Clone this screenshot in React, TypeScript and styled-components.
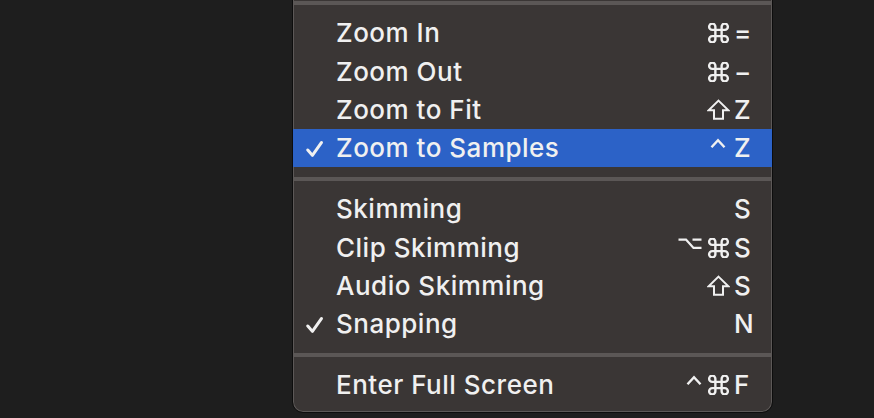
import React from 'react';
import styled, { createGlobalStyle } from 'styled-components';

const GlobalStyle = createGlobalStyle`
  html, body {
    margin: 0;
    padding: 0;
    background: #1e1e1e;
    overflow: hidden;
  }
  body {
    font-family: Inter, "Noto Sans", sans-serif;
  }
`;

type ModKey = 'cmd' | 'shift' | 'opt' | 'ctrl';

type Item =
  | { kind: 'sep' }
  | {
      kind: 'item';
      label: string;
      mods?: ModKey[];
      keyName?: string;
      checked?: boolean;
      active?: boolean;
    };

const items: Item[] = [
  { kind: 'sep' },
  { kind: 'item', label: 'Zoom In', mods: ['cmd'], keyName: '=' },
  { kind: 'item', label: 'Zoom Out', mods: ['cmd'], keyName: '−' },
  { kind: 'item', label: 'Zoom to Fit', mods: ['shift'], keyName: 'Z' },
  { kind: 'item', label: 'Zoom to Samples', mods: ['ctrl'], keyName: 'Z', checked: true, active: true },
  { kind: 'sep' },
  { kind: 'item', label: 'Skimming', keyName: 'S' },
  { kind: 'item', label: 'Clip Skimming', mods: ['opt', 'cmd'], keyName: 'S' },
  { kind: 'item', label: 'Audio Skimming', mods: ['shift'], keyName: 'S' },
  { kind: 'item', label: 'Snapping', keyName: 'N', checked: true },
  { kind: 'sep' },
  { kind: 'item', label: 'Enter Full Screen', mods: ['ctrl', 'cmd'], keyName: 'F' },
];

const INK = '#f0f0f0';

// modifier key glyphs, each drawn in a 20px tall box centred on the cap height
function ModGlyph({ name, last }: { name: ModKey; last: boolean }) {
  if (name === 'cmd') {
    return (
      <svg width="23" height="20" viewBox="2.2 2.4 19.6 19.2">
        <path
          d="M15 6v12a3 3 0 1 0 3-3H6a3 3 0 1 0 3 3V6a3 3 0 1 0-3 3h12a3 3 0 1 0-3-3"
          fill="none"
          stroke={INK}
          strokeWidth="2.3"
          strokeLinejoin="round"
        />
      </svg>
    );
  }
  if (name === 'shift') {
    return (
      <svg width="23" height="21" viewBox="0 0 23 21">
        <path
          d="M11.5 1.6 L21.4 11.3 H16 V19.8 H7 V11.3 H1.6 Z"
          fill="none"
          stroke={INK}
          strokeWidth="2"
          strokeLinejoin="miter"
        />
      </svg>
    );
  }
  if (name === 'opt') {
    return (
      <svg width="24" height="20" viewBox="0 0 24 20">
        <path d="M0.5 1.6 H8 L15.5 9.9 H23.5 M14.5 1.6 H23.5" fill="none" stroke={INK} strokeWidth="2.3" />
      </svg>
    );
  }
  // the control caret keeps a little room on its right when it stands alone
  return (
    <svg width={last ? 20 : 16} height="20" viewBox={`0 0 ${last ? 20 : 16} 20`}>
      <path d="M1.5 9.3 L8 2.2 L14.5 9.3" fill="none" stroke={INK} strokeWidth="2.4" />
    </svg>
  );
}

function CheckMark() {
  return (
    <svg width="17" height="16" viewBox="0 0 17 16">
      <path
        d="M1.8 9 L6.4 14.4 L15.4 1.6"
        fill="none"
        stroke={INK}
        strokeWidth="3"
        strokeLinecap="round"
        strokeLinejoin="round"
      />
    </svg>
  );
}

export default function App() {
  return (
    <Screen>
      <GlobalStyle />
      <Menu>
        {items.map((it, i) =>
          it.kind === 'sep' ? (
            <Separator key={i} />
          ) : (
            <Row key={i} $active={it.active}>
              <CheckCell>{it.checked && <CheckMark />}</CheckCell>
              <Label>{it.label}</Label>
              <Shortcut>
                <Mods>
                  {(it.mods || []).map((m, j, all) => (
                    <ModGlyph key={j} name={m} last={j === all.length - 1} />
                  ))}
                </Mods>
                <KeyName>{it.keyName}</KeyName>
              </Shortcut>
            </Row>
          ),
        )}
      </Menu>
    </Screen>
  );
}

const Screen = styled.div`
  width: 874px;
  height: 418px;
  display: flex;
  align-items: flex-start;
  padding-left: 292px;
  box-sizing: border-box;
`;

const Menu = styled.div`
  margin-top: -10px;
  width: 481px;
  box-sizing: border-box;
  border: 1px solid #0d0d0d;
  border-radius: 0 0 11px 11px;
  background: #3a3635;
  box-shadow: inset 0 0 0 1px #5c5857;
  padding-bottom: 7px;
  display: flex;
  flex-direction: column;
  overflow: hidden;
`;

const Separator = styled.div`
  height: 23.3px;
  display: flex;
  flex-direction: column;
  padding-top: 10px;
  box-sizing: border-box;
  &::after {
    content: '';
    display: block;
    height: 4px;
    background: #5b5756;
    margin: 0 1px;
  }
`;

const Row = styled.div<{ $active?: boolean }>`
  height: 38.2px;
  display: grid;
  grid-template-columns: 43px 1fr auto;
  align-items: center;
  padding-right: 20px;
  background: ${({ $active }) => ($active ? '#2c62c7' : 'transparent')};
  color: ${INK};
  font-size: 26px;
  font-weight: 500;
  letter-spacing: 0.5px;
  line-height: 1;
`;

const CheckCell = styled.div`
  display: flex;
  align-items: center;
  padding-left: 13px;
  padding-top: 2px;
`;

const Label = styled.span`
  white-space: nowrap;
`;

const Shortcut = styled.div`
  display: flex;
  align-items: center;
`;

const Mods = styled.div`
  display: flex;
  align-items: center;
  gap: 5px;
  justify-content: flex-end;
  margin-right: 4px;
`;

const KeyName = styled.span`
  width: 18px;
  text-align: left;
  letter-spacing: 0;
`;
